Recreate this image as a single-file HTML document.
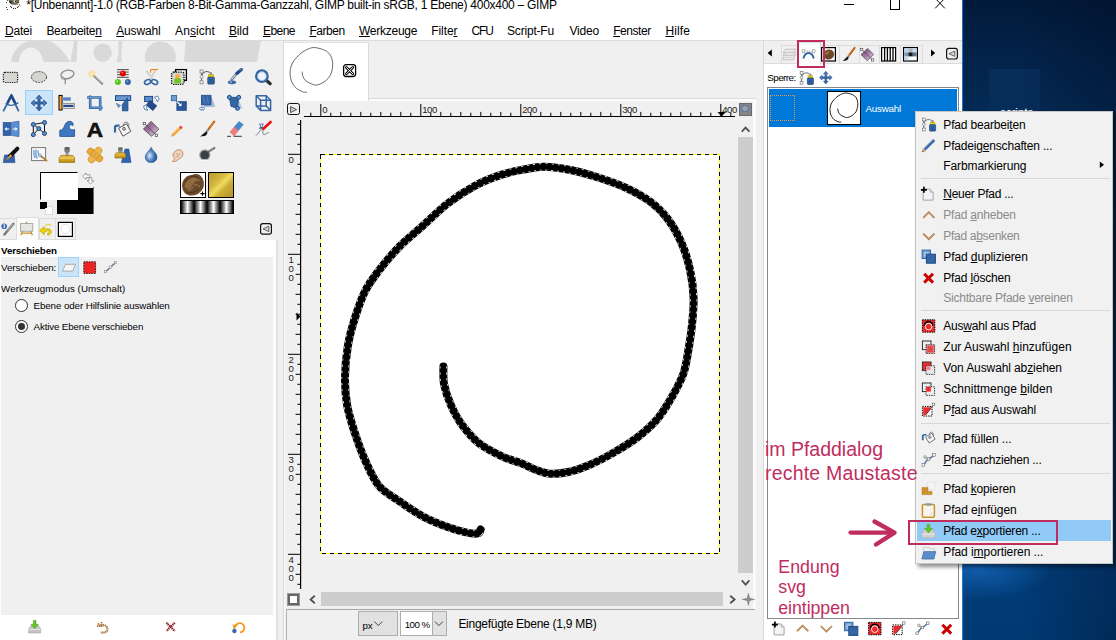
<!DOCTYPE html>
<html lang="de"><head><meta charset="utf-8"><title>GIMP Pfad exportieren</title>
<style>
html,body{margin:0;padding:0}
body{width:1116px;height:640px;overflow:hidden;position:relative;background:#f0f0f0;font-family:"Liberation Sans",sans-serif}
#root{position:absolute;left:0;top:0;width:1116px;height:640px;overflow:hidden}
#root div,#root svg,#root span.t{position:absolute}
span.t{white-space:nowrap;line-height:1;display:block}
span.t u{text-decoration:underline;text-underline-offset:0.9px;text-decoration-thickness:1px}
</style></head><body><div id="root">
<div style="left:963px;top:0;width:153px;height:640px;background:linear-gradient(180deg,#021a3a 0px,#03234a 60px,#042a54 112px,#06386c 400px,#023d79 566px,#003a74 640px)"></div>
<div style="left:963px;top:0;width:153px;height:640px;background:linear-gradient(90deg,rgba(0,10,30,0) 35%,rgba(0,10,30,.32) 100%)"></div>
<div style="left:963px;top:500px;width:153px;height:140px;background:radial-gradient(ellipse 75px 32px at 14px 68px,rgba(30,120,215,.55),rgba(30,120,215,0))"></div>
<div style="left:989px;top:68.7px;width:51.2px;height:43.3px;background:linear-gradient(180deg,rgba(30,100,170,.13),rgba(30,100,170,.06));"></div>
<span class="t d" id="t48" style="left:1000.0px;top:107.01px;font-size:12px;color:#fff;letter-spacing:-0.210px;">scripts</span>
<div style="left:962.2px;top:0px;width:1px;height:640px;background:#1a7ad0;"></div>
<div style="left:0px;top:0px;width:962px;height:40px;background:#fff;"></div>
<div style="left:0px;top:40px;width:962px;height:1px;background:#dcdcdc;"></div>
<div style="left:844px;top:4px;width:10px;height:1px;background:#000;"></div>
<div style="left:889.5px;top:-2px;width:8.5px;height:9.5px;border:1px solid #000;box-sizing:content-box"></div>
<svg style="left:934px;top:-2px" width="12" height="12" viewBox="0 0 12 12"><path d="M1.2 0.3L10.8 10.3M10.8 0.3L1.2 10.3" stroke="#000" stroke-width="1" fill="none"/></svg>
<svg style="left:0;top:0" width="24" height="12" viewBox="0 0 24 12"><path d="M8.6 0L9.2 2.2L10.6 3.8L12.2 4.7L17.6 4.7L18.8 2.6L19.4 0Z" fill="#6f6a5c"/><path d="M8.8 0.6L10.2 3L11.8 3.6L11.4 1.2L10 1.6Z" fill="#111"/><path d="M13.6 0L14 2.6L15.6 3L15.2 0Z" fill="#cfcabc"/><path d="M15.8 3.4L17.8 4.4L17.9 3Z" fill="#c07a22"/><circle cx="15.6" cy="1.5" r=".6" fill="#111"/><circle cx="18.3" cy="2.3" r=".5" fill="#111"/><circle cx="6.5" cy="2.5" r=".55" fill="#111"/><circle cx="6.5" cy="7.5" r=".55" fill="#111"/><circle cx="7.5" cy="9.5" r=".55" fill="#111"/><circle cx="10.4" cy="6.5" r=".55" fill="#111"/><circle cx="11.4" cy="7.4" r=".55" fill="#111"/><circle cx="13.4" cy="8.4" r=".55" fill="#111"/><circle cx="15.4" cy="8.4" r=".55" fill="#111"/><circle cx="17.5" cy="7.4" r=".55" fill="#111"/><circle cx="18.6" cy="6.5" r=".55" fill="#111"/><circle cx="19.4" cy="4.9" r=".55" fill="#111"/><circle cx="7.4" cy="0.3" r=".55" fill="#111"/><path d="M19.4 4.9L20.6 6.6" stroke="#999" stroke-width=".5"/></svg>
<svg style="left:0;top:41px" width="278" height="21" viewBox="0 41 278 21"><g fill="#d9d9d9"><path d="M11.3 62C12 52 19 43 30 41L50 41C59 46 66 54 70.3 62L43.3 62C42 53 37 47.6 31 47.6C25 47.6 20 53 18.8 62Z"/><path d="M70.5 62L74 41L77.5 41L76.5 62Z"/><circle cx="102.6" cy="52.8" r="9.2"/><path d="M116.5 62C119 55 119 47 118 41L122.5 41C121.5 48 121 56 122 62Z"/><circle cx="160.3" cy="57" r="15.6"/><path d="M184 62L185.5 41L261 41L257 62Z"/></g></svg>
<div style="left:25.2px;top:90px;width:26px;height:23px;background:#cce4f7;border:1px solid #99d1ff;box-sizing:content-box"></div>
<div style="left:57px;top:187.5px;width:37px;height:26.5px;background:#000;"></div>
<div style="left:92.5px;top:186.5px;width:1.5px;height:27.5px;background:#666;"></div>
<div style="left:40px;top:172.3px;width:36px;height:25.5px;background:#fff;border:1px solid #000;border-right-color:#fff;border-bottom-color:#fff;box-sizing:content-box"></div>
<div style="left:40px;top:201.5px;width:7px;height:7px;background:#000;"></div>
<div style="left:44.5px;top:206px;width:6px;height:6.5px;background:#fff;border:1px solid #ddd;box-sizing:content-box"></div>
<div style="left:40px;top:201.5px;width:6.5px;height:6.5px;background:#000;"></div>
<div style="left:180px;top:172.3px;width:23.8px;height:24px;background:#fff;border:1px solid #000;box-sizing:content-box"></div>
<div style="left:207.7px;top:172.3px;width:24.5px;height:24px;background:linear-gradient(135deg,#b89a2c 0%,#d4b840 35%,#efdc60 50%,#cdae38 65%,#b39426 100%);border:1px solid #000;box-sizing:content-box"></div>
<div style="left:180px;top:200px;width:52.3px;height:12.3px;background:repeating-linear-gradient(90deg,#000 0px,#fff 6.5px,#000 13px);border:1px solid #000;box-sizing:content-box"></div>
<div style="left:16.4px;top:216.5px;width:22.3px;height:23.7px;background:#fbfbfb;border:1px solid #dcdcdc;border-bottom:none;box-sizing:border-box"></div>
<div style="left:0px;top:218.4px;width:16.4px;height:21.2px;background:#f0f0f0;border:1px solid #dcdcdc;border-left:none;border-right:none;box-sizing:border-box"></div>
<div style="left:38.6px;top:218.4px;width:37.9px;height:21.2px;background:#f0f0f0;border:1px solid #dcdcdc;box-sizing:border-box"></div>
<div style="left:55.3px;top:218.4px;width:1px;height:21.2px;background:#dcdcdc;"></div>
<div style="left:0px;top:239.8px;width:276.4px;height:400.2px;background:#fff;"></div>
<div style="left:276.4px;top:239.8px;width:1.2px;height:400.2px;background:#e2e2e2;"></div>
<div style="left:0.9px;top:257px;width:271.7px;height:357.5px;background:#f0f0f0;"></div>
<div style="left:58.1px;top:257.2px;width:18.9px;height:17.6px;background:#cce4f7;border:1px solid #99d1ff;box-sizing:content-box"></div>
<div style="left:15px;top:299.2px;width:10.7px;height:10.7px;border-radius:50%;background:#fff;border:1px solid #333;box-sizing:content-box"></div>
<div style="left:15px;top:319.9px;width:10.7px;height:10.7px;border-radius:50%;background:#fff;border:1px solid #333;box-sizing:content-box"></div>
<div style="left:17.9px;top:322.8px;width:6.9px;height:6.9px;border-radius:50%;background:#333"></div>
<div style="left:283.3px;top:41px;width:0.9px;height:599px;background:#dadada;"></div>
<div style="left:284.2px;top:41px;width:472.1px;height:57.5px;background:#f0f0f0;"></div>
<div style="left:284.2px;top:98px;width:472.1px;height:0.8px;background:#dadada;"></div>
<div style="left:284.2px;top:98.8px;width:472.1px;height:2.4px;background:#fcfcfc;"></div>
<div style="left:284.2px;top:41.8px;width:85px;height:59.4px;background:#fff;border-right:1px solid #dadada;border-top:1px solid #e4e4e4;box-sizing:border-box"></div>
<div style="left:753.2px;top:101px;width:3.1px;height:508px;background:#fafafa;"></div>
<div style="left:284.2px;top:101px;width:1.3px;height:539px;background:#fafafa;"></div>
<div style="left:287.2px;top:103.2px;width:10.4px;height:10.2px;border:1.2px solid #111;border-radius:2.5px;box-sizing:content-box"></div>
<svg style="left:287px;top:103px" width="13" height="13" viewBox="0 0 13 13"><path d="M3.6 3.6L9.6 6.5L3.6 9.6Z" fill="#ccc" stroke="#444" stroke-width=".9"/></svg>
<svg style="left:0;top:0" width="760" height="640" viewBox="0 0 760 640" shape-rendering="auto"><path d="M304 116.5H735" stroke="#000" stroke-width="1.2"/><path d="M300.6 120V589" stroke="#000" stroke-width="1.2"/><path d="M310.8 112.7V116.5M320.8 104V116.5M330.8 112.7V116.5M340.8 111.9V116.5M350.8 112.7V116.5M360.8 111.9V116.5M370.8 112.7V116.5M380.8 111.9V116.5M390.8 112.7V116.5M400.8 111.9V116.5M410.8 112.7V116.5M420.8 104V116.5M430.8 112.7V116.5M440.8 111.9V116.5M450.8 112.7V116.5M460.8 111.9V116.5M470.8 112.7V116.5M480.8 111.9V116.5M490.8 112.7V116.5M500.8 111.9V116.5M510.8 112.7V116.5M520.8 104V116.5M530.8 112.7V116.5M540.8 111.9V116.5M550.8 112.7V116.5M560.8 111.9V116.5M570.8 112.7V116.5M580.8 111.9V116.5M590.8 112.7V116.5M600.8 111.9V116.5M610.8 112.7V116.5M620.8 104V116.5M630.8 112.7V116.5M640.8 111.9V116.5M650.8 112.7V116.5M660.8 111.9V116.5M670.8 112.7V116.5M680.8 111.9V116.5M690.8 112.7V116.5M700.8 111.9V116.5M710.8 112.7V116.5M720.8 104V116.5M730.8 112.7V116.5" stroke="#000" stroke-width="1"/><path d="M297.4 124.3H300.6M295.6 134.3H300.6M297.4 144.3H300.6M288 154.3H300.6M297.4 164.3H300.6M295.6 174.3H300.6M297.4 184.3H300.6M295.6 194.3H300.6M297.4 204.3H300.6M295.6 214.3H300.6M297.4 224.3H300.6M295.6 234.3H300.6M297.4 244.3H300.6M288 254.3H300.6M297.4 264.3H300.6M295.6 274.3H300.6M297.4 284.3H300.6M295.6 294.3H300.6M297.4 304.3H300.6M295.6 314.3H300.6M297.4 324.3H300.6M295.6 334.3H300.6M297.4 344.3H300.6M288 354.3H300.6M297.4 364.3H300.6M295.6 374.3H300.6M297.4 384.3H300.6M295.6 394.3H300.6M297.4 404.3H300.6M295.6 414.3H300.6M297.4 424.3H300.6M295.6 434.3H300.6M297.4 444.3H300.6M288 454.3H300.6M297.4 464.3H300.6M295.6 474.3H300.6M297.4 484.3H300.6M295.6 494.3H300.6M297.4 504.3H300.6M295.6 514.3H300.6M297.4 524.3H300.6M295.6 534.3H300.6M297.4 544.3H300.6M288 554.3H300.6M297.4 564.3H300.6M295.6 574.3H300.6M297.4 584.3H300.6" stroke="#000" stroke-width="1"/><path d="M717.5 112H725.8L721.6 116.4Z" fill="#000"/><path d="M296.5 312.5V320.5L300.4 316.5Z" fill="#000"/></svg>
<div style="left:739px;top:103.1px;width:12.9px;height:12.5px;background:#858585;border:1px solid #6a6a6a;box-sizing:border-box"></div>
<div style="left:741px;top:104.8px;width:5.5px;height:5.5px;border-radius:50%;background:#a0a0a0;border:1.6px solid #3b6fc0;box-sizing:content-box"></div>
<div style="left:321px;top:155px;width:398px;height:398px;background:#fff;"></div>
<svg style="left:0;top:0" width="760" height="640" viewBox="0 0 760 640"><rect x="320.5" y="154.5" width="399" height="399" fill="none" stroke="#ffff00" stroke-width="1" shape-rendering="crispEdges"/><rect x="320.5" y="154.5" width="399" height="399" fill="none" stroke="#000" stroke-width="1" stroke-dasharray="4 4" shape-rendering="crispEdges"/><path d="M443.4 366.5C443.5 369.5 442.9 378.0 444.1 384.4C445.4 390.8 448.0 398.4 450.9 405.0C453.8 411.6 456.7 417.6 461.3 423.9C465.9 430.2 471.5 437.4 478.4 442.8C485.3 448.2 495.6 453.3 502.5 456.6C509.4 459.9 514.2 460.5 520.0 462.8C525.8 465.1 532.1 468.5 537.2 470.3C542.4 472.1 545.8 473.5 550.9 473.8C556.0 474.1 561.8 473.4 568.1 472.0C574.4 470.6 581.3 468.3 588.8 465.2C596.2 462.1 604.8 457.7 612.8 453.1C620.8 448.5 629.4 443.4 636.9 437.7C644.4 432.0 651.8 425.4 657.5 418.8C663.2 412.2 667.0 405.6 671.3 398.1C675.6 390.6 680.4 382.0 683.3 374.0C686.1 366.0 687.0 358.1 688.4 350.0C689.8 341.9 691.0 334.2 691.9 325.6C692.8 317.0 693.9 307.3 693.6 298.1C693.3 288.9 692.2 279.8 690.2 270.6C688.2 261.4 685.3 251.7 681.6 243.1C677.9 234.5 673.0 225.9 667.8 219.0C662.6 212.1 657.5 207.1 650.6 201.9C643.7 196.8 635.2 192.1 626.6 188.1C618.0 184.1 608.2 180.8 599.0 177.8C589.8 174.8 580.8 172.1 571.6 170.3C562.4 168.5 551.8 167.0 544.0 166.8C536.2 166.6 531.9 168.0 525.0 169.3C518.1 170.6 510.8 171.7 502.5 174.4C494.2 177.1 484.2 180.8 475.0 185.7C465.8 190.6 456.1 197.0 447.5 203.6C438.9 210.2 431.4 218.1 423.4 225.3C415.4 232.5 406.8 239.0 399.4 246.6C392.0 254.2 384.5 263.2 378.8 270.6C373.1 278.1 369.0 283.3 365.0 291.3C361.0 299.3 357.6 309.6 354.7 318.8C351.8 328.0 349.4 336.5 347.8 346.3C346.2 356.1 345.1 367.7 345.0 377.5C344.9 387.3 345.5 395.8 347.1 405.0C348.7 414.2 351.7 423.3 354.7 432.5C357.7 441.7 361.0 451.1 365.0 460.0C369.0 468.9 373.1 478.9 378.8 485.8C384.5 492.7 392.0 496.1 399.4 501.3C406.8 506.5 415.4 512.4 423.4 516.7C431.4 521.0 440.1 524.3 447.5 527.0C454.9 529.7 463.0 531.9 468.1 532.9C473.2 533.9 476.3 533.8 478.4 533.2C480.5 532.6 480.2 530.1 480.6 529.5" fill="none" stroke="#000" stroke-width="8" stroke-linecap="round" stroke-linejoin="round"/><path d="M443.4 366.5C443.5 369.5 442.9 378.0 444.1 384.4C445.4 390.8 448.0 398.4 450.9 405.0C453.8 411.6 456.7 417.6 461.3 423.9C465.9 430.2 471.5 437.4 478.4 442.8C485.3 448.2 495.6 453.3 502.5 456.6C509.4 459.9 514.2 460.5 520.0 462.8C525.8 465.1 532.1 468.5 537.2 470.3C542.4 472.1 545.8 473.5 550.9 473.8C556.0 474.1 561.8 473.4 568.1 472.0C574.4 470.6 581.3 468.3 588.8 465.2C596.2 462.1 604.8 457.7 612.8 453.1C620.8 448.5 629.4 443.4 636.9 437.7C644.4 432.0 651.8 425.4 657.5 418.8C663.2 412.2 667.0 405.6 671.3 398.1C675.6 390.6 680.4 382.0 683.3 374.0C686.1 366.0 687.0 358.1 688.4 350.0C689.8 341.9 691.0 334.2 691.9 325.6C692.8 317.0 693.9 307.3 693.6 298.1C693.3 288.9 692.2 279.8 690.2 270.6C688.2 261.4 685.3 251.7 681.6 243.1C677.9 234.5 673.0 225.9 667.8 219.0C662.6 212.1 657.5 207.1 650.6 201.9C643.7 196.8 635.2 192.1 626.6 188.1C618.0 184.1 608.2 180.8 599.0 177.8C589.8 174.8 580.8 172.1 571.6 170.3C562.4 168.5 551.8 167.0 544.0 166.8C536.2 166.6 531.9 168.0 525.0 169.3C518.1 170.6 510.8 171.7 502.5 174.4C494.2 177.1 484.2 180.8 475.0 185.7C465.8 190.6 456.1 197.0 447.5 203.6C438.9 210.2 431.4 218.1 423.4 225.3C415.4 232.5 406.8 239.0 399.4 246.6C392.0 254.2 384.5 263.2 378.8 270.6C373.1 278.1 369.0 283.3 365.0 291.3C361.0 299.3 357.6 309.6 354.7 318.8C351.8 328.0 349.4 336.5 347.8 346.3C346.2 356.1 345.1 367.7 345.0 377.5C344.9 387.3 345.5 395.8 347.1 405.0C348.7 414.2 351.7 423.3 354.7 432.5C357.7 441.7 361.0 451.1 365.0 460.0C369.0 468.9 373.1 478.9 378.8 485.8C384.5 492.7 392.0 496.1 399.4 501.3C406.8 506.5 415.4 512.4 423.4 516.7C431.4 521.0 440.1 524.3 447.5 527.0C454.9 529.7 463.0 531.9 468.1 532.9C473.2 533.9 476.3 533.8 478.4 533.2C480.5 532.6 480.2 530.1 480.6 529.5" fill="none" stroke="#fff" stroke-width="7.3" stroke-linejoin="round" stroke-dasharray="2.2 3.8" opacity=".9"/><path d="M443.4 366.5C443.5 369.5 442.9 378.0 444.1 384.4C445.4 390.8 448.0 398.4 450.9 405.0C453.8 411.6 456.7 417.6 461.3 423.9C465.9 430.2 471.5 437.4 478.4 442.8C485.3 448.2 495.6 453.3 502.5 456.6C509.4 459.9 514.2 460.5 520.0 462.8C525.8 465.1 532.1 468.5 537.2 470.3C542.4 472.1 545.8 473.5 550.9 473.8C556.0 474.1 561.8 473.4 568.1 472.0C574.4 470.6 581.3 468.3 588.8 465.2C596.2 462.1 604.8 457.7 612.8 453.1C620.8 448.5 629.4 443.4 636.9 437.7C644.4 432.0 651.8 425.4 657.5 418.8C663.2 412.2 667.0 405.6 671.3 398.1C675.6 390.6 680.4 382.0 683.3 374.0C686.1 366.0 687.0 358.1 688.4 350.0C689.8 341.9 691.0 334.2 691.9 325.6C692.8 317.0 693.9 307.3 693.6 298.1C693.3 288.9 692.2 279.8 690.2 270.6C688.2 261.4 685.3 251.7 681.6 243.1C677.9 234.5 673.0 225.9 667.8 219.0C662.6 212.1 657.5 207.1 650.6 201.9C643.7 196.8 635.2 192.1 626.6 188.1C618.0 184.1 608.2 180.8 599.0 177.8C589.8 174.8 580.8 172.1 571.6 170.3C562.4 168.5 551.8 167.0 544.0 166.8C536.2 166.6 531.9 168.0 525.0 169.3C518.1 170.6 510.8 171.7 502.5 174.4C494.2 177.1 484.2 180.8 475.0 185.7C465.8 190.6 456.1 197.0 447.5 203.6C438.9 210.2 431.4 218.1 423.4 225.3C415.4 232.5 406.8 239.0 399.4 246.6C392.0 254.2 384.5 263.2 378.8 270.6C373.1 278.1 369.0 283.3 365.0 291.3C361.0 299.3 357.6 309.6 354.7 318.8C351.8 328.0 349.4 336.5 347.8 346.3C346.2 356.1 345.1 367.7 345.0 377.5C344.9 387.3 345.5 395.8 347.1 405.0C348.7 414.2 351.7 423.3 354.7 432.5C357.7 441.7 361.0 451.1 365.0 460.0C369.0 468.9 373.1 478.9 378.8 485.8C384.5 492.7 392.0 496.1 399.4 501.3C406.8 506.5 415.4 512.4 423.4 516.7C431.4 521.0 440.1 524.3 447.5 527.0C454.9 529.7 463.0 531.9 468.1 532.9C473.2 533.9 476.3 533.8 478.4 533.2C480.5 532.6 480.2 530.1 480.6 529.5" fill="none" stroke="#000" stroke-width="5.6" stroke-linecap="round" stroke-linejoin="round"/></svg>
<svg style="left:287.4px;top:46.4px" width="50" height="50" viewBox="0 0 50 50"><path d="M15.1 26.0C15.2 26.8 15.3 29.2 16.0 30.7C16.7 32.3 17.9 34.2 19.3 35.3C20.8 36.5 23.0 37.2 24.4 37.8C25.9 38.4 26.8 39.1 28.2 39.1C29.6 39.2 31.1 38.8 32.9 38.1C34.6 37.3 37.1 36.1 38.8 34.7C40.4 33.3 41.9 31.7 43.0 29.9C44.0 28.1 44.6 26.0 45.1 24.0C45.5 21.9 45.8 19.8 45.7 17.6C45.6 15.4 45.1 12.8 44.2 10.9C43.4 8.9 42.1 7.2 40.4 5.8C38.8 4.5 36.3 3.6 34.1 2.9C31.9 2.2 29.3 1.6 27.4 1.5C25.4 1.5 24.3 1.7 22.3 2.5C20.3 3.2 17.7 4.6 15.6 6.0C13.5 7.5 11.3 9.5 9.7 11.3C8.0 13.1 6.5 14.7 5.5 16.8C4.4 18.8 3.7 21.2 3.3 23.5C3.0 25.8 2.9 28.4 3.3 30.7C3.6 33.0 4.4 35.5 5.5 37.4C6.5 39.4 8.0 41.1 9.7 42.5C11.3 43.9 13.9 45.0 15.6 45.7C17.2 46.3 18.7 46.4 19.3 46.4C20.0 46.5 19.6 46.0 19.6 46.0" fill="none" stroke="#6a6a6a" stroke-width="1" stroke-linecap="round"/></svg>
<svg style="left:342px;top:63px" width="16" height="16" viewBox="0 0 16 16"><rect x="1.6" y="1.7" width="12" height="11.8" rx="2.4" fill="#fff" stroke="#000" stroke-width="1.3"/><path d="M4.4 4.5L10.8 10.8M10.8 4.5L4.4 10.8" stroke="#000" stroke-width="2.6" stroke-linecap="round"/><path d="M4.4 4.5L10.8 10.8M10.8 4.5L4.4 10.8" stroke="#fff" stroke-width="1" stroke-linecap="round"/></svg>
<div style="left:738.3px;top:137.3px;width:14.5px;height:436.2px;background:#cdcdcd;"></div>
<div style="left:321px;top:592.3px;width:401.7px;height:14.2px;background:#cdcdcd;"></div>
<svg style="left:300px;top:120px" width="460" height="490" viewBox="300 120 460 490"><g fill="none" stroke="#505050" stroke-width="1.8"><path d="M741.8 131.6L745.6 127.6L749.4 131.6"/><path d="M741.8 580.4L745.6 584.6L749.4 580.4"/><path d="M314.8 595.8L310.6 599.5L314.8 603.2"/><path d="M730.2 595.8L734.6 599.5L730.2 603.2"/></g></svg>
<div style="left:287.6px;top:593.6px;width:7.4px;height:7.4px;background:#fff;border:2.4px dashed #666;outline:0.6px solid #999;box-sizing:content-box"></div>
<svg style="left:742px;top:593px" width="13" height="13" viewBox="0 0 13 13"><path d="M6.4 0.3L7.6 5.2L12.6 6.4L7.6 7.6L6.4 12.6L5.2 7.6L0.2 6.4L5.2 5.2Z" fill="#8c8c8c" stroke="#666" stroke-width=".4"/></svg>
<div style="left:285.5px;top:609px;width:469px;height:1.1px;background:#a6a6a6;"></div>
<div style="left:285.5px;top:609px;width:1px;height:31px;background:#b4b4b4;"></div>
<div style="left:358.2px;top:611.4px;width:40px;height:25px;background:#e1e1e1;border:1.5px solid #adadad;box-sizing:border-box"></div>
<div style="left:400.2px;top:611.4px;width:46.4px;height:25px;background:#fff;border:1.5px solid #adadad;box-sizing:border-box"></div>
<div style="left:432.3px;top:612.4px;width:13.3px;height:23px;background:#e1e1e1;border-left:1px solid #adadad;box-sizing:border-box"></div>
<svg style="left:370px;top:615px" width="80" height="16" viewBox="370 615 80 16"><g fill="none" stroke="#444" stroke-width="1"><path d="M374.4 621.6L378.3 625.6L382.2 621.6"/><path d="M435 621.6L438.9 625.6L442.8 621.6"/></g></svg>
<div style="left:763.4px;top:64px;width:198.6px;height:576px;background:#fff;"></div>
<div style="left:762.6px;top:41px;width:0.9px;height:599px;background:#dadada;"></div>
<div style="left:763.4px;top:63.3px;width:198.6px;height:0.8px;background:#dcdcdc;"></div>
<div style="left:780.8px;top:45px;width:0.9px;height:18.5px;background:#dcdcdc;"></div>
<div style="left:820.2px;top:45px;width:0.9px;height:18.5px;background:#dcdcdc;"></div>
<div style="left:839.4px;top:45px;width:0.9px;height:18.5px;background:#dcdcdc;"></div>
<div style="left:858.8px;top:45px;width:0.9px;height:18.5px;background:#dcdcdc;"></div>
<div style="left:878.5px;top:45px;width:0.9px;height:18.5px;background:#dcdcdc;"></div>
<div style="left:900px;top:45px;width:0.9px;height:18.5px;background:#dcdcdc;"></div>
<div style="left:922.4px;top:45px;width:0.9px;height:18.5px;background:#dcdcdc;"></div>
<div style="left:780.8px;top:44.5px;width:142.5px;height:0.9px;background:#dcdcdc;"></div>
<div style="left:797.5px;top:41.5px;width:23px;height:23.5px;background:#fbfbfb;border:1px solid #dcdcdc;border-bottom:none;box-sizing:border-box"></div>
<div style="left:767.2px;top:87.4px;width:191.8px;height:531.2px;background:#fff;border:1px solid #828790;box-sizing:border-box"></div>
<div style="left:769px;top:89px;width:188.3px;height:37.7px;background:#0078d7;"></div>
<div style="left:769.8px;top:95.2px;width:23.6px;height:23.6px;border:1.2px dotted #e8963c;box-sizing:content-box"></div>
<div style="left:827.2px;top:91px;width:33.6px;height:34px;background:#fff;border:1px solid #000;box-sizing:border-box"></div>
<svg style="left:828.2px;top:92px" width="32" height="32" viewBox="0 0 32 32"><path d="M9.8 17.0C9.9 17.5 10.0 19.0 10.4 20.1C10.9 21.1 11.7 22.3 12.6 23.1C13.6 23.9 15.0 24.3 16.0 24.7C16.9 25.1 17.5 25.5 18.4 25.6C19.3 25.6 20.3 25.4 21.5 24.9C22.6 24.4 24.2 23.6 25.3 22.7C26.4 21.8 27.4 20.7 28.1 19.5C28.8 18.3 29.1 17.0 29.4 15.7C29.7 14.3 29.9 12.9 29.8 11.5C29.8 10.1 29.5 8.4 28.9 7.1C28.3 5.8 27.5 4.7 26.4 3.8C25.3 2.9 23.7 2.3 22.3 1.9C20.9 1.4 19.2 1.0 17.9 1.0C16.6 1.0 15.8 1.1 14.6 1.6C13.3 2.1 11.5 3.0 10.2 3.9C8.8 4.9 7.4 6.2 6.3 7.4C5.2 8.6 4.2 9.6 3.6 11.0C2.9 12.3 2.4 13.8 2.2 15.4C1.9 16.9 1.9 18.5 2.1 20.1C2.4 21.6 2.9 23.2 3.6 24.5C4.3 25.7 5.2 26.9 6.3 27.8C7.4 28.7 9.1 29.4 10.2 29.8C11.2 30.2 12.2 30.3 12.6 30.3C13.1 30.3 12.8 30.1 12.8 30.0" fill="none" stroke="#222" stroke-width="1" stroke-linecap="round"/></svg>
<svg style="left:0;top:0" width="280" height="640" viewBox="0 0 280 640">
<defs><radialGradient id="gw"><stop offset="0" stop-color="#fffbe0"/><stop offset=".45" stop-color="#fbd98a"/><stop offset="1" stop-color="#fbd98a" stop-opacity="0"/></radialGradient><radialGradient id="gd" cx=".38" cy=".55" r=".6"><stop offset="0" stop-color="#dfeaf8"/><stop offset=".5" stop-color="#5b8ccb"/><stop offset="1" stop-color="#204a87"/></radialGradient><linearGradient id="gp" x1="0" y1="0" x2="1" y2="1"><stop offset="0" stop-color="#6a3f72"/><stop offset=".5" stop-color="#a57aa6"/><stop offset="1" stop-color="#eee4ee"/></linearGradient><linearGradient id="gs" x1="0" y1="0" x2="0" y2="1"><stop offset="0" stop-color="#f0c545"/><stop offset="1" stop-color="#c18a17"/></linearGradient><radialGradient id="gk"><stop offset="0" stop-color="#2e3436"/><stop offset=".6" stop-color="#4a5054"/><stop offset="1" stop-color="#4a5054" stop-opacity="0"/></radialGradient><linearGradient id="gh" x1="0" y1="0" x2="0" y2="1"><stop offset="0" stop-color="#555"/><stop offset="1" stop-color="#aaa"/></linearGradient></defs>
<rect x="3.4" y="72.3" width="14.2" height="10.2" rx="1.6" fill="#d3d7cf" stroke="#111" stroke-width="1.2" stroke-dasharray="1.2 1.1"/>
<ellipse cx="39" cy="77" rx="7.6" ry="5.4" fill="#d3d7cf" stroke="#444" stroke-width="1" stroke-dasharray="2 1"/>
<ellipse cx="67.4" cy="74.4" rx="6.6" ry="4.2" transform="rotate(-12 67.4 74.4)" fill="none" stroke="#8a8a8a" stroke-width="1.3"/><path d="M62.8 77.8C65 79 66.4 81 64.8 84.2" fill="none" stroke="#8a8a8a" stroke-width="1.2"/><circle cx="62.7" cy="78" r="1.3" fill="#bbb" stroke="#888" stroke-width=".6"/>
<path d="M92.6 74.6L102.2 83.8" stroke="#8c8c84" stroke-width="2.2" stroke-linecap="round"/><path d="M93 74.4L101.8 82.8" stroke="#c8c8c0" stroke-width=".8"/><circle cx="91.8" cy="73.7" r="4.2" fill="url(#gw)"/>
<path d="M117 69.6H128.8M117 72.1H128.8M117 74.7H128.8M117 77.3H128.8" stroke="#222" stroke-width=".8"/><circle cx="122.9" cy="73.4" r="3" fill="#e40000"/><circle cx="122.2" cy="72.6" r="1" fill="#ff6a5a"/><circle cx="117.9" cy="82" r="3" fill="#59c41c"/><circle cx="117.2" cy="81.2" r="1" fill="#a8ee70"/><circle cx="127.9" cy="82" r="3" fill="#3465a4"/><circle cx="127.2" cy="81.2" r="1" fill="#729fcf"/>
<path d="M146.4 70.8L152.6 79.4M155.4 70.8L149.6 79.4" stroke="#b8b8b8" stroke-width="1.6"/><path d="M146.4 70.8L152.6 79.4M155.4 70.8L149.6 79.4" stroke="#fff" stroke-width=".5"/><ellipse cx="147.6" cy="82" rx="3.2" ry="2.2" transform="rotate(-25 147.6 82)" fill="none" stroke="#3465a4" stroke-width="1.6"/><ellipse cx="154.6" cy="82" rx="3.2" ry="2.2" transform="rotate(25 154.6 82)" fill="none" stroke="#3465a4" stroke-width="1.6"/><path d="M150.6 72.8V69.6H158" fill="none" stroke="#f57900" stroke-width="1"/>
<rect x="175.6" y="69.6" width="10.8" height="10.8" fill="#f4f4f4" stroke="#000" stroke-width="1.3"/><rect x="171.6" y="72.2" width="12.4" height="12.2" rx="2" fill="#d3d7cf" stroke="#000" stroke-width="1.3" stroke-dasharray="1.2 1.1"/><path d="M174.2 83.2V80.4C174.2 78.6 175.4 77.8 177.6 77.8C179.8 77.8 181 78.6 181 80.4V83.2Z" fill="#6cc81e"/><circle cx="177.6" cy="76.2" r="2.3" fill="#fcaf3e"/>
<g transform="translate(199.4 69.8) scale(1.08)"><path d="M2 1.5V11.5M2 5C4 1.5 7 0.8 9.6 2.6" fill="none" stroke="#666" stroke-width="1"/><rect x="0.6" y="0.2" width="2.8" height="2.8" fill="#fff" stroke="#777" stroke-width=".7"/><circle cx="2" cy="6.4" r="1.4" fill="#fff" stroke="#777" stroke-width=".7"/><rect x="0.6" y="10.2" width="2.8" height="2.8" fill="#fff" stroke="#777" stroke-width=".7"/><path d="M9.8 2.2L11.6 2.2L11.9 5H9.5Z" fill="#8a8a8a"/><rect x="8.4" y="4.6" width="4.8" height="2.2" fill="#edd400" stroke="#b39a00" stroke-width=".4"/><rect x="7.8" y="6.8" width="6" height="6.4" rx=".6" fill="#3465a4" stroke="#204a87" stroke-width=".8"/><rect x="9.6" y="8.4" width="2.4" height="4.4" fill="#204a87" opacity=".5"/></g>
<ellipse cx="232" cy="82.3" rx="4" ry="1.6" fill="#3465a4" stroke="#204a87" stroke-width=".5"/><ellipse cx="231" cy="82.1" rx="1.2" ry=".5" fill="#dde8f6"/><path d="M231.6 79.6L237 73" stroke="#5f6f88" stroke-width="2.6" stroke-linecap="round"/><path d="M231.8 79.2L236.8 73.2" stroke="#c6d2e6" stroke-width="1.2" stroke-linecap="round"/><path d="M236.8 73.4L241.4 69.6" stroke="#204a87" stroke-width="3.2" stroke-linecap="round"/><path d="M239.6 70.2L241.2 69" stroke="#5c85bd" stroke-width="1.2" stroke-linecap="round"/>
<path d="M266.8 80.8L270.2 83.8" stroke="#2e2e2e" stroke-width="3.2" stroke-linecap="round"/><circle cx="261.9" cy="76.2" r="5.8" fill="#eef2fa" stroke="#3465a4" stroke-width="2.2"/><circle cx="261.9" cy="76.2" r="4.4" fill="none" stroke="#729fcf" stroke-width=".6"/>
<path d="M11.4 96L3.6 110.6M11.4 96L18.4 110.6" stroke="#3465a4" stroke-width="1.8" stroke-linecap="round"/><path d="M11.4 95.4L7.8 102.4M11.4 95.4L14.8 102.4" stroke="#204a87" stroke-width="2.6" stroke-linecap="round"/><path d="M5.6 103.4C9 106 14 106 18.2 102.6" fill="none" stroke="#3465a4" stroke-width="1.7"/><circle cx="11.4" cy="96" r="1.3" fill="#204a87"/>
<g transform="translate(31 95)"><path d="M8 0L11 3.4H9.1V6.9H12.6V5L16 8L12.6 11V9.1H9.1V12.6H11L8 16L5 12.6H6.9V9.1H3.4V11L0 8L3.4 5V6.9H6.9V3.4H5Z" fill="#3465a4" stroke="#204a87" stroke-width=".6" stroke-linejoin="round"/><path d="M8 1.4L9.8 3.4H6.2ZM1.4 8L3.4 6.2V9.8ZM14.6 8L12.6 6.2V9.8Z" fill="#729fcf" opacity=".7"/></g>
<rect x="59" y="95.4" width="3.1" height="14.6" fill="#fcaf3e" stroke="#000" stroke-width="1"/><rect x="62.8" y="97.3" width="7.9" height="3.4" fill="#5c85bd" stroke="#8ba6cf" stroke-width=".6"/><rect x="62.8" y="103.4" width="11.6" height="5" fill="#e8e8e8" stroke="#888" stroke-width=".9"/><rect x="63.4" y="104.8" width="10" height="2.2" fill="#204a87"/>
<path d="M87 97.5H100.2V110.8M90.2 95.4V107.7H102.6" fill="none" stroke="#3465a4" stroke-width="2.6"/><path d="M87 97.5H100.2V110.8M90.2 95.4V107.7H102.6" fill="none" stroke="#729fcf" stroke-width=".9"/>
<rect x="115.5" y="95.7" width="15.2" height="4.8" fill="#6b96d0" stroke="#204a87" stroke-width="1"/><path d="M127.4 98L122.4 104.4V110.8H127.9V100.4Z" fill="#3465a4" stroke="#204a87" stroke-width=".9"/><path d="M116.2 103.2L120.6 105.4L118.4 107.6Z" fill="#729fcf" stroke="#3465a4" stroke-width=".6"/>
<rect x="144.6" y="96.4" width="8" height="5.2" fill="#5b8ccb" stroke="#204a87" stroke-width="1"/><rect x="147.4" y="102.6" width="8.2" height="5.6" transform="rotate(40 151.5 105.4)" fill="#204a87" stroke="#204a87" stroke-width="1"/><path d="M154.4 97.2L157.6 96L159.2 99.2L157.4 101.8L156.6 99.6Z" fill="#fff" stroke="#3465a4" stroke-width=".8"/><path d="M146.8 104.8L143.6 106L144.6 109.4L147.6 110.4L146.6 108.2Z" fill="#fff" stroke="#3465a4" stroke-width=".8"/>
<rect x="171.4" y="95.5" width="5.2" height="5.2" fill="#729fcf" stroke="#3465a4" stroke-width=".9"/><rect x="176.4" y="101.2" width="10.4" height="9.6" fill="#204a87"/><rect x="177.2" y="102" width="8.8" height="8" fill="#2a5599"/><path d="M177.2 101.8L180.4 105" stroke="#fff" stroke-width="1.2"/><path d="M181.6 103L181.4 106.2L178.4 106Z" fill="#fff"/>
<path d="M211 97L214.8 106.6H204Z" fill="#a9c0e0" stroke="#8ba6cf" stroke-width=".6"/><rect x="201.4" y="95.3" width="9.6" height="9.6" fill="#3465a4" stroke="#204a87" stroke-width=".8"/><path d="M203 96.6L205.4 103.6M207 96.6L208.4 103.6" stroke="#5b8ccb" stroke-width=".8"/><path d="M199.2 108.6L201.4 106.8V107.8H203V106.8L205 108.6L203 110.4V109.4H201.4V110.4Z" fill="#fff" stroke="#3465a4" stroke-width=".7"/>
<path d="M238.6 99L242.4 108.8H236Z" fill="#b4c6e2"/><path d="M229.4 97.3H238.7L237.5 108.3L231 106.4Z" fill="#3465a4" stroke="#204a87" stroke-width=".8"/><circle cx="229.4" cy="97.3" r="2" fill="#5b8ccb" stroke="#204a87" stroke-width="1"/><circle cx="238.7" cy="97.3" r="2" fill="#5b8ccb" stroke="#204a87" stroke-width="1"/><circle cx="237.5" cy="108.3" r="2" fill="#5b8ccb" stroke="#204a87" stroke-width="1"/>
<g fill="none" stroke="#3465a4" stroke-width="1.5" stroke-linejoin="round"><rect x="256.2" y="95.8" width="10" height="10.2"/><rect x="260.6" y="100.2" width="10" height="10.2"/><path d="M256.2 95.8L260.6 100.2M266.2 95.8L270.6 100.2M256.2 106L260.6 110.4M266.2 106L270.6 110.4"/></g>
<rect x="3.2" y="122.6" width="7.4" height="12.8" fill="#2f63ae" stroke="#204a87" stroke-width=".7"/><path d="M11.2 122.4L19 121.2V136.6L11.2 135.4Z" fill="#5d90d2" stroke="#3465a4" stroke-width=".7"/><path d="M4.6 129L6.8 127V128.4H9.2V129.6H6.8V131ZM17.6 129L15.4 127V128.4H12.8V129.6H15.4V131Z" fill="#fff"/>
<path d="M33.3 124.5L44.5 122.5V133.5L38.8 128.6L33.3 134.7ZM33.3 124.5L38.8 128.6" fill="none" stroke="#111" stroke-width="1"/><circle cx="33.3" cy="124.5" r="2" fill="#5b8ccb" stroke="#204a87" stroke-width="1"/><circle cx="44.5" cy="122.5" r="2" fill="#5b8ccb" stroke="#204a87" stroke-width="1"/><circle cx="38.8" cy="128.6" r="2" fill="#5b8ccb" stroke="#204a87" stroke-width="1"/><circle cx="33.3" cy="134.7" r="2" fill="#5b8ccb" stroke="#204a87" stroke-width="1"/><circle cx="44.5" cy="133.5" r="2" fill="#5b8ccb" stroke="#204a87" stroke-width="1"/>
<path d="M59.8 136.4V130.2C62.4 130.6 63.6 128.4 64.6 125.6C65.8 122.2 68.6 120.6 71 121.6C73 122.4 73.6 124 73 125.6C71.6 124.2 69.6 124.4 69.2 126.4C68.8 128.6 71.4 130.6 74.6 129.6V136.4Z" fill="#3f78c2" stroke="#204a87" stroke-width=".8"/>
<text x="95" y="136.6" font-family="Liberation Sans, sans-serif" font-weight="bold" font-size="20.4" text-anchor="middle" textLength="16.4" lengthAdjust="spacingAndGlyphs" fill="#111" stroke="#111" stroke-width=".5">A</text>
<g transform="translate(114 122.6)"><path d="M1 10V4.6C1 3.4 2 3 3 3H5.6" fill="none" stroke="#3465a4" stroke-width="2.2"/><path d="M4.6 5.6L12.6 1.2L16.8 8.8L9 13.6Z" fill="#f6f6f6" stroke="#555" stroke-width="1"/><path d="M9.6 2.6C9.4 0.4 11 -1 13 -0.2C14.6 0.6 15 2.6 14.8 5" fill="none" stroke="#777" stroke-width="1"/><circle cx="10" cy="6.2" r="1.5" fill="#bbb" stroke="#555" stroke-width=".8"/></g>
<path d="M151.1 121.4L158.8 129L151.5 136.3L143.4 129Z" fill="url(#gp)" stroke="#555" stroke-width=".9"/><path d="M145 124L156 135" stroke="#444" stroke-width=".8"/><rect x="143.2" y="122.4" width="2.4" height="2.4" fill="#fff" stroke="#444" stroke-width=".7"/><rect x="155.2" y="134" width="2.4" height="2.4" fill="#fff" stroke="#444" stroke-width=".7"/>
<path d="M172.6 135.2L180.6 127.6" stroke="#f5a030" stroke-width="2.8"/><path d="M172.4 134.4L180 127.2" stroke="#fdd080" stroke-width=".7"/><path d="M180 128.2L181.8 126.6" stroke="#ef4040" stroke-width="2.8"/><path d="M171 136.8L171.8 134.2L173.6 136Z" fill="#c9a36a"/>
<path d="M214.2 121.6L208 129.8" stroke="#c3640c" stroke-width="2.2" stroke-linecap="round"/><path d="M213.6 121.8L210 126.4" stroke="#f0a040" stroke-width=".7"/><path d="M208.2 129.6L206 132.4" stroke="#999" stroke-width="2.4"/><path d="M206.8 131.4C208 133 206.6 135.4 204.6 136L200 136.4C202.6 135 204 132.4 206.8 131.4Z" fill="#111"/>
<path d="M229.9 132.1L234.4 126.8L238.7 130.2L234.2 135.9Z" fill="#e98080" stroke="#d46a6a" stroke-width=".5"/><path d="M234.4 126.8L239 121.4L243.3 124.6L238.7 130.2Z" fill="#4b88ca" stroke="#3a74b4" stroke-width=".5"/><path d="M227.2 136.3H231M233.6 136.3H241.8" stroke="#333" stroke-width="1"/>
<path d="M255.8 135.8C258.6 133.6 259.6 130 262 129.6C264 129.4 262 134.6 263.8 134.8C265.4 134.8 266.6 132.4 269.2 132.6" fill="none" stroke="#6f8490" stroke-width=".9"/><path d="M259.4 124H263.4L262 126.2L263.4 128.6H259.4L260.8 126.2Z" fill="#e8f0fa" stroke="#3465a4" stroke-width=".8"/><path d="M260 127.6H262.8" stroke="#3465a4" stroke-width="1.2"/><path d="M270.6 122L263.4 128.8" stroke="#ef1010" stroke-width="2.6" stroke-linecap="round"/>
<path d="M3.2 162.6L4.6 155H14.2L15 162.6Z" fill="#2f63ae" stroke="#204a87" stroke-width=".6"/><path d="M17.4 148.6L10 156" stroke="#111" stroke-width="4" stroke-linecap="round"/><path d="M10.6 154.2L12.2 156.2L5.2 160.8Z" fill="#e8b560" stroke="#8a5a10" stroke-width=".5"/>
<rect x="31.6" y="147.6" width="14" height="13" fill="#fafafa" stroke="#777" stroke-width="1"/><path d="M34 150C33.4 153 34 156 35.2 158M36 149.4C35.6 152 36 156.4 37.4 158.6M37.8 150.4C38 153 38.4 155 39.4 156.2" fill="none" stroke="#7aa7dc" stroke-width="1.5"/><path d="M40.8 156L46.6 160.6" stroke="#b9771e" stroke-width="1.7" stroke-linecap="round"/><circle cx="40" cy="155.4" r="1.4" fill="#dfe8f4" stroke="#4a6a9a" stroke-width=".6"/>
<path d="M64.4 147.8C64.4 146.6 69.8 146.6 69.8 147.8V151C69.8 152 68.6 152.4 68.6 153.4V156H65.6V153.4C65.6 152.4 64.4 152 64.4 151Z" fill="url(#gh)"/><path d="M61 155.4H72.8L74.6 157.8V162.4H59.2V157.8Z" fill="url(#gs)" stroke="#8f6a10" stroke-width=".7"/><path d="M59.6 158.2H74.2" stroke="#f8dc80" stroke-width=".8"/>
<g transform="rotate(38 95 155)"><rect x="86" y="151.6" width="18" height="6.8" rx="3.2" fill="#e9a93a" stroke="#c98518" stroke-width=".6"/></g><g transform="rotate(-52 95 155)"><rect x="86" y="151.6" width="18" height="6.8" rx="3.2" fill="#eeb650" stroke="#c98518" stroke-width=".6"/><rect x="92" y="152.2" width="6" height="5.6" fill="#d99a30"/><path d="M93.4 153.6H93.5M95 153.6H95.1M96.6 153.6H96.7M93.4 156.4H93.5M95 156.4H95.1M96.6 156.4H96.7" stroke="#f8e0b0" stroke-width="1" stroke-linecap="round"/></g>
<path d="M125 149H128.8L131 162.6H121.4Z" fill="#2f63ae" stroke="#204a87" stroke-width=".6"/><rect x="118.2" y="147.4" width="4.4" height="6" fill="url(#gh)"/><path d="M116.2 152.8H124.4L125.6 154.4V158H115V154.4Z" fill="url(#gs)" stroke="#8f6a10" stroke-width=".6"/>
<path d="M151.1 147.2C152.2 150.6 157 153 157 157C157 160.4 154.4 162.6 151.1 162.6C147.8 162.6 145.2 160.4 145.2 157C145.2 153 150 150.6 151.1 147.2Z" fill="url(#gd)" stroke="#204a87" stroke-width=".5"/>
<path d="M176 150.6C178 149 181 149.4 182.4 151.6C183.6 153.6 182.8 156.4 180.8 157.8L178.2 159.6C176.6 161.4 173.8 162 172.4 161.2C173.2 160 174.4 159.6 175 158.4C172.8 157.2 172.4 154.2 174 152.4Z" fill="#efd2bc" stroke="#b87a4e" stroke-width=".8"/><path d="M176.4 153.4C177.4 154.6 178.8 155 180 154.4M175.8 156C176.8 156.8 177.8 156.8 178.6 156.4" fill="none" stroke="#b87a4e" stroke-width=".6"/>
<path d="M208.6 151.6L214.4 148" stroke="#7c8082" stroke-width="2.2" stroke-linecap="round"/><circle cx="204.8" cy="155" r="6.2" fill="url(#gk)"/><circle cx="204.8" cy="155" r="4" fill="#3a4044"/><ellipse cx="204.8" cy="160.2" rx="3.2" ry=".8" fill="#fff"/>
<path d="M82.6 176.2L86 173V174.8H89.8V177.6H86V179.4Z" fill="#fff" stroke="#777" stroke-width=".7"/><path d="M90.6 184L87.2 180.8H89V177.6H91.8V180.8H93.8Z" fill="#fff" stroke="#777" stroke-width=".7"/>
<path d="M182.4 188C181.4 184 183 179.4 186.6 176.6C189 174.8 191.6 175.4 193.6 174.4C196.6 173.4 200 174.6 201.6 177C203.6 179.4 204.4 183 203.6 186.4C203 189.6 200.8 191.4 198.6 193.6C196 195.6 191.4 196 188 195C185 194 183 191.4 182.4 188Z" fill="#6a4a2a"/><path d="M184.6 186C185 182.6 187.4 179.2 191 178.2C194.6 177.2 198.6 178.4 200.4 181.4C198.4 180.4 196 180.8 194.4 182.4C192.6 184.2 192 187.4 189.6 188.8C187.6 189.8 185.2 188.6 184.6 186Z" fill="#8f6b3e"/><path d="M187 192C190 193.4 195 192.6 198.4 189M190 176.6C192.6 175.6 196 176 198.6 178M185 183C186 180 188 178.6 190 178" fill="none" stroke="#4a3018" stroke-width="1"/><path d="M194 185C196 184.4 198.6 185 200 187M188 190.6C190 190 192.4 188.6 193.4 186.6" fill="none" stroke="#a8844e" stroke-width=".9"/><path d="M200.4 193.6H204.6M202.5 191.4V195.8" stroke="#000" stroke-width="1.1"/>
<circle cx="4.2" cy="226.2" r="2.8" fill="#3a6ab8"/><rect x="3.7" y="224" width="1" height="4" fill="#fff"/><path d="M13.4 223.8L4.4 234.6" stroke="#777" stroke-width="2.4" stroke-linecap="round"/><path d="M13 224L7.6 230.4" stroke="#c4c4c4" stroke-width=".9"/>
<path d="M26.6 221.8V223.6M22.6 231L20.8 235.2M30.6 231L32.4 235.2M21.8 233.2H31.4" stroke="#c8902a" stroke-width="1.3" fill="none"/><rect x="20.4" y="223.6" width="12.4" height="7.6" fill="#e6e6e2" stroke="#9a9a92" stroke-width=".8"/>
<path d="M39.6 230.6L44.2 226.4V228.8H48.4C50.2 228.8 51.4 230.4 51.2 232C51 234 49.6 235.2 47.6 235.2V233.2C48.8 233.2 49.2 232.6 49.2 231.8C49.2 231 48.6 230.6 47.8 230.6L44.2 232.4V234.8Z" fill="#edd400" stroke="#b39a00" stroke-width=".6"/><path d="M45.4 225.6C47.4 223.6 50.4 224 51 226" fill="none" stroke="#e8d040" stroke-width="1.2"/>
<rect x="58.4" y="222.4" width="14" height="14" fill="#fff" stroke="#000" stroke-width="1.2"/><circle cx="65.4" cy="229" r="4.6" fill="none" stroke="#ccc" stroke-width=".6"/>
<rect x="260.6" y="223.6" width="10.8" height="10.6" rx="2.2" fill="#f0f0f0" stroke="#111" stroke-width="1.2"/><path d="M268.8 226.2V231.6L263 228.9Z" fill="#d8d8d8" stroke="#444" stroke-width=".8"/>
<path d="M65.6 264.3H75.5L72.8 271.1H62.4Z" fill="#f4f4f4" stroke="#aaa" stroke-width="1"/>
<rect x="83.8" y="261.8" width="11.8" height="11.6" fill="#ee2424" stroke="#222" stroke-width="1" stroke-dasharray="1.6 1"/>
<path d="M105.4 272L115.6 262.6" stroke="#54708f" stroke-width="1.3"/><rect x="109.2" y="266" width="2.6" height="2.6" fill="#fff" stroke="#777" stroke-width=".5"/><rect x="104.4" y="270.6" width="2.2" height="2.2" fill="#fff" stroke="#777" stroke-width=".5"/><rect x="114.4" y="261.6" width="2.2" height="2.2" fill="#fff" stroke="#777" stroke-width=".5"/>
<path d="M28.6 633V629L31 625.4H38.4L40.8 629V633Z" fill="#c4c4c4" stroke="#a8a8a8" stroke-width=".6"/><path d="M28.8 629.4H40.6" stroke="#eee" stroke-width=".8"/><path d="M33.4 620.4H36V624.4H38.4L34.7 628.6L31 624.4H33.4Z" fill="#62c81e" stroke="#3f9a10" stroke-width=".5"/>
<path d="M98 623.4L101 626.4M97 626H101.6V621.6" fill="none" stroke="#b07c48" stroke-width="1.8" stroke-dasharray="1.3 .5"/><path d="M101 625.4C104.8 624.2 107.8 626.6 107.4 629.6C107 632.2 104 633.4 100.6 632.2" fill="none" stroke="#b07c48" stroke-width="2.1" stroke-dasharray="1.4 .5"/>
<path d="M166.4 622.8L174.8 631M174.8 622.8L166.4 631" stroke="#8c1c1c" stroke-width="2.2" stroke-dasharray="1.3 .6"/>
<path d="M234.6 627.4C235.6 623.4 240.6 621.6 243.2 624.6C245.6 627.4 244 632 240 632.4" fill="none" stroke="#f59a1c" stroke-width="1.8"/><path d="M232.4 624.4L237.6 625.2L234 629.4Z" fill="#f59a1c"/><circle cx="234.4" cy="631" r="1.9" fill="#3a6ab8" stroke="#204a87" stroke-width=".5"/>
</svg>
<svg style="left:760px;top:40px" width="203" height="600" viewBox="760 40 203 600">
<defs><linearGradient id="gp2" x1="0" y1="0" x2="1" y2="1"><stop offset="0" stop-color="#6a3f72"/><stop offset=".5" stop-color="#a57aa6"/><stop offset="1" stop-color="#eee4ee"/></linearGradient></defs>
<path d="M771.8 49.4V56.4L767.6 52.9Z" fill="#000"/><path d="M931 49.4V56.4L935.2 52.9Z" fill="#000"/>
<g fill="#e9e9e9" stroke="#bdbdbd" stroke-width=".8"><path d="M783 58L785.4 54.6H796L793.6 58Z"/><path d="M783 55.4L785.4 52H796L793.6 55.4Z"/><path d="M783 52.6L785.4 49.2H796L793.6 52.6Z"/><path d="M783 58V59.8H793.6V58"/></g>
<path d="M803.4 58.6C804.4 54.6 806.4 53 808.6 53C810.8 53 812.8 54.6 813.8 58.6" fill="none" stroke="#3465a4" stroke-width="1.9"/><path d="M804.8 51.2H812.4" stroke="#999" stroke-width=".8" stroke-dasharray="1.2 .8"/><rect x="802.2" y="49.8" width="2.6" height="2.6" fill="#fff" stroke="#888" stroke-width=".6"/><rect x="812.4" y="49.8" width="2.6" height="2.6" fill="#fff" stroke="#888" stroke-width=".6"/>
<rect x="821.6" y="47.6" width="13.8" height="13.4" fill="#fff" stroke="#000" stroke-width="1.2"/><path d="M823.4 55C823 51.6 826 49.2 829.4 49.4C832.4 49.6 834.4 52 834 55C833.6 58 831 59.8 828 59.6C825.6 59.4 823.8 57.6 823.4 55Z" fill="#6b4a28"/><path d="M825 54C825.6 51.8 828 50.6 830.4 51.2C829 52 828.4 53.6 827.4 54.8C826.6 55.4 825.4 55 825 54Z" fill="#94703e"/>
<path d="M854.6 47.8L849.2 55.2" stroke="#c3640c" stroke-width="2" stroke-linecap="round"/><path d="M849.4 55L847.6 57.4" stroke="#999" stroke-width="2.2"/><path d="M848.2 56.6C849.2 58 848 60 846.2 60.6L842.6 61C844.8 59.8 846 57.4 848.2 56.6Z" fill="#111"/>
<path d="M867.6 48.4L873.6 54.4L867.2 60.6L861 54.6Z" fill="url(#gp2)" stroke="#555" stroke-width=".8"/><path d="M862.2 49.8L872.6 60" stroke="#444" stroke-width=".7"/><rect x="860.6" y="48.4" width="2.2" height="2.2" fill="#fff" stroke="#444" stroke-width=".6"/><rect x="871.6" y="58.8" width="2.2" height="2.2" fill="#fff" stroke="#444" stroke-width=".6"/>
<rect x="881.6" y="47.6" width="14" height="13.4" fill="#fff" stroke="#000" stroke-width="1.2"/><path d="M884.6 47.6V61M887.4 47.6V61M890.2 47.6V61M893 47.6V61" stroke="#000" stroke-width="1.3"/>
<rect x="903.6" y="47.6" width="13.8" height="13.4" fill="#fff" stroke="#000" stroke-width="1.2"/><rect x="904.4" y="48.4" width="4" height="4" fill="#b9cfe4"/><rect x="908.4" y="48.4" width="4.4" height="4" fill="#a9b4c4"/><rect x="912.6" y="48.4" width="4" height="4" fill="#c8d8e8"/><rect x="904.4" y="52.4" width="4" height="4" fill="#7d95b0"/><rect x="908.4" y="52.4" width="4.4" height="4" fill="#1a1a1a"/><rect x="912.6" y="52.4" width="4" height="4" fill="#5f6f80"/><rect x="904.4" y="56.4" width="4" height="3.8" fill="#c4d6ea"/>
<rect x="946.6" y="48.4" width="10.8" height="10.6" rx="2.2" fill="#f0f0f0" stroke="#111" stroke-width="1.2"/><path d="M954.8 51V56.4L949 53.7Z" fill="#d8d8d8" stroke="#444" stroke-width=".8"/>
<g transform="translate(799.6 71.2)"><path d="M2 1.5V11.5M2 5C4 1.5 7 0.8 9.6 2.6" fill="none" stroke="#666" stroke-width="1"/><rect x="0.6" y="0.2" width="2.8" height="2.8" fill="#fff" stroke="#777" stroke-width=".7"/><circle cx="2" cy="6.4" r="1.4" fill="#fff" stroke="#777" stroke-width=".7"/><rect x="0.6" y="10.2" width="2.8" height="2.8" fill="#fff" stroke="#777" stroke-width=".7"/><path d="M9.8 2.2L11.6 2.2L11.9 5H9.5Z" fill="#8a8a8a"/><rect x="8.4" y="4.6" width="4.8" height="2.2" fill="#edd400" stroke="#b39a00" stroke-width=".4"/><rect x="7.8" y="6.8" width="6" height="6.4" rx=".6" fill="#3465a4" stroke="#204a87" stroke-width=".8"/><rect x="9.6" y="8.4" width="2.4" height="4.4" fill="#204a87" opacity=".5"/></g>
<g transform="translate(819.4 71.2) scale(.8)"><path d="M8 0L11 3.4H9.1V6.9H12.6V5L16 8L12.6 11V9.1H9.1V12.6H11L8 16L5 12.6H6.9V9.1H3.4V11L0 8L3.4 5V6.9H6.9V3.4H5Z" fill="#3465a4" stroke="#204a87" stroke-width=".6" stroke-linejoin="round"/><path d="M8 1.4L9.8 3.4H6.2ZM1.4 8L3.4 6.2V9.8ZM14.6 8L12.6 6.2V9.8Z" fill="#729fcf" opacity=".7"/></g>
<g transform="translate(771.6 621.4)"><path d="M2.5 2.5H9.5L12.5 5.5V13.5H2.5Z" fill="#f4f4f4" stroke="#9a9a9a" stroke-width=".9"/><path d="M9.5 2.5V5.5H12.5" fill="#ddd" stroke="#9a9a9a" stroke-width=".7"/><path d="M0.3 3.2H6.3M3.3 0.2V6.2" stroke="#000" stroke-width="1.7"/></g>
<g transform="translate(796 623.6)"><path d="M1 7.6L6.6 2L12.2 7.6" fill="none" stroke="#a8703c" stroke-width="1.7"/><path d="M1 7.6L6.6 2L12.2 7.6" fill="none" stroke="#e0b080" stroke-width=".7"/></g>
<g transform="translate(819.8 624)"><path d="M1 2L6.6 7.6L12.2 2" fill="none" stroke="#a8703c" stroke-width="1.7"/><path d="M1 2L6.6 7.6L12.2 2" fill="none" stroke="#e0b080" stroke-width=".7"/></g>
<g transform="translate(844 621.8)"><rect x="0.5" y="0.5" width="8.4" height="8.4" fill="#729fcf" stroke="#3465a4" stroke-width="1"/><rect x="2.4" y="2.4" width="4.6" height="4.6" fill="#a4c2e6"/><rect x="4.8" y="4.6" width="9" height="9" fill="#3465a4" stroke="#204a87" stroke-width="1"/></g>
<g transform="translate(868 621.8)"><rect x="0.6" y="0.6" width="12.4" height="12.4" fill="#ef2929" stroke="#000" stroke-width="1" stroke-dasharray="1.4 1"/><path d="M2.6 6.6A4.2 4.2 0 0 1 11 6.6" fill="none" stroke="#000" stroke-width="1.6"/><circle cx="6.8" cy="7.4" r="3.3" fill="#ef2929" stroke="#fff" stroke-width=".9"/></g>
<g transform="translate(892 621.4)"><rect x="0.6" y="3.6" width="9.6" height="9.6" fill="#fff" stroke="#000" stroke-width="1" stroke-dasharray="1.4 1"/><path d="M1.4 4.4H9.4V6L4 12.4H1.4Z" fill="#ef2929"/><path d="M4 12L12 1.6" stroke="#555" stroke-width="1"/><rect x="10.6" y="0.4" width="2.4" height="2.4" fill="#fff" stroke="#666" stroke-width=".6"/></g>
<g transform="translate(915.4 621.8)"><path d="M1.6 11.6C4 10 4.4 6.4 7 5.6C9.6 4.8 10.4 3 12.4 1.4" fill="none" stroke="#56749c" stroke-width="1.5"/><rect x="0.4" y="10.2" width="2.6" height="2.6" fill="#fff" stroke="#666" stroke-width=".6"/><rect x="5.6" y="4.4" width="2.6" height="2.6" fill="#fff" stroke="#666" stroke-width=".6"/><rect x="11" y="0.2" width="2.6" height="2.6" fill="#fff" stroke="#666" stroke-width=".6"/><circle cx="3.4" cy="3.6" r="1.3" fill="#fff" stroke="#666" stroke-width=".6"/><path d="M3.4 3.6L6.8 5.8" stroke="#777" stroke-width=".6"/></g>
<g transform="translate(940.8 623.2)"><path d="M1.6 1.6L10.4 10.4M10.4 1.6L1.6 10.4" stroke="#cc0000" stroke-width="3" stroke-linecap="butt"/></g>
</svg>
<span class="t " id="t0" style="left:26.3px;top:-1.00px;font-size:12px;color:#000;letter-spacing:-0.266px;">*[Unbenannt]-1.0 (RGB-Farben 8-Bit-Gamma-Ganzzahl, GIMP built-in sRGB, 1 Ebene) 400x400 – GIMP</span>
<span class="t " id="t1" style="left:5.0px;top:25.01px;font-size:12px;color:#000;letter-spacing:-0.226px;"><u>D</u>atei</span>
<span class="t " id="t2" style="left:46.4px;top:25.01px;font-size:12px;color:#000;letter-spacing:-0.286px;">Bearbeite<u>n</u></span>
<span class="t " id="t3" style="left:116.2px;top:25.01px;font-size:12px;color:#000;letter-spacing:-0.139px;"><u>A</u>uswahl</span>
<span class="t " id="t4" style="left:175.1px;top:25.01px;font-size:12px;color:#000;letter-spacing:0.075px;">An<u>s</u>icht</span>
<span class="t " id="t5" style="left:229.0px;top:25.01px;font-size:12px;color:#000;letter-spacing:-0.158px;"><u>B</u>ild</span>
<span class="t " id="t6" style="left:263.0px;top:25.01px;font-size:12px;color:#000;letter-spacing:-0.544px;"><u>E</u>bene</span>
<span class="t " id="t7" style="left:309.4px;top:25.01px;font-size:12px;color:#000;letter-spacing:-0.458px;"><u>F</u>arben</span>
<span class="t " id="t8" style="left:359.0px;top:25.01px;font-size:12px;color:#000;letter-spacing:-0.254px;"><u>W</u>erkzeuge</span>
<span class="t " id="t9" style="left:431.3px;top:25.01px;font-size:12px;color:#000;letter-spacing:-0.095px;">Filte<u>r</u></span>
<span class="t " id="t10" style="left:471.4px;top:25.01px;font-size:12px;color:#000;letter-spacing:-1.124px;">CFU</span>
<span class="t " id="t11" style="left:507.0px;top:25.01px;font-size:12px;color:#000;letter-spacing:-0.188px;">Script-Fu</span>
<span class="t " id="t12" style="left:569.5px;top:25.01px;font-size:12px;color:#000;letter-spacing:-0.217px;">Video</span>
<span class="t " id="t13" style="left:613.2px;top:25.01px;font-size:12px;color:#000;letter-spacing:-0.443px;"><u>F</u>enster</span>
<span class="t " id="t14" style="left:665.4px;top:25.01px;font-size:12px;color:#000;letter-spacing:0.117px;"><u>H</u>ilfe</span>
<span class="t " id="t15" style="left:1.1px;top:246.02px;font-size:9.8px;color:#000;font-weight:bold;letter-spacing:-0.194px;">Verschieben</span>
<span class="t " id="t16" style="left:1.1px;top:263.02px;font-size:9.8px;color:#000;letter-spacing:-0.130px;">Verschieben:</span>
<span class="t " id="t17" style="left:1.1px;top:284.02px;font-size:9.8px;color:#000;letter-spacing:0.033px;">Werkzeugmodus (Umschalt)</span>
<span class="t " id="t18" style="left:33.5px;top:301.02px;font-size:9.8px;color:#000;letter-spacing:-0.104px;">Ebene oder Hilfslinie auswählen</span>
<span class="t " id="t19" style="left:33.5px;top:322.02px;font-size:9.8px;color:#000;letter-spacing:-0.149px;">Aktive Ebene verschieben</span>
<span class="t " id="t20" style="left:767.2px;top:73.02px;font-size:9.8px;color:#000;letter-spacing:-0.506px;">Sperre:</span>
<span class="t " id="t21" style="left:865.4px;top:104.02px;font-size:9.8px;color:#fff;letter-spacing:-0.190px;">Auswahl</span>
<span class="t " id="t22" style="left:362.6px;top:621.02px;font-size:9.8px;color:#000;letter-spacing:-0.180px;">px</span>
<span class="t " id="t23" style="left:404.7px;top:620.02px;font-size:9.8px;color:#000;letter-spacing:-0.576px;">100 %</span>
<span class="t " id="t24" style="left:458.4px;top:618.01px;font-size:12px;color:#000;letter-spacing:-0.271px;">Eingefügte Ebene (1,9 MB)</span>
<span class="t r" id="t25" style="left:322.3px;top:105.01px;font-size:9.6px;color:#222;letter-spacing:-0.544px;">0</span>
<span class="t r" id="t26" style="left:422.3px;top:105.01px;font-size:9.6px;color:#222;letter-spacing:-0.539px;">100</span>
<span class="t r" id="t27" style="left:522.3px;top:105.01px;font-size:9.6px;color:#222;letter-spacing:-0.539px;">200</span>
<span class="t r" id="t28" style="left:622.3px;top:105.01px;font-size:9.6px;color:#222;letter-spacing:-0.539px;">300</span>
<span class="t r" id="t29" style="left:722.3px;top:105.01px;font-size:9.6px;color:#222;letter-spacing:-0.539px;">400</span>
<span class="t r" id="t30" style="left:288.4px;top:154.71px;font-size:9.6px;color:#222;letter-spacing:-0.544px;">0</span>
<span class="t r" id="t31" style="left:288.4px;top:254.71px;font-size:9.6px;color:#222;letter-spacing:-0.544px;">1</span>
<span class="t r" id="t32" style="left:288.4px;top:263.60px;font-size:9.6px;color:#222;letter-spacing:-0.544px;">0</span>
<span class="t r" id="t33" style="left:288.4px;top:272.51px;font-size:9.6px;color:#222;letter-spacing:-0.544px;">0</span>
<span class="t r" id="t34" style="left:288.4px;top:354.71px;font-size:9.6px;color:#222;letter-spacing:-0.544px;">2</span>
<span class="t r" id="t35" style="left:288.4px;top:363.60px;font-size:9.6px;color:#222;letter-spacing:-0.544px;">0</span>
<span class="t r" id="t36" style="left:288.4px;top:372.51px;font-size:9.6px;color:#222;letter-spacing:-0.544px;">0</span>
<span class="t r" id="t37" style="left:288.4px;top:454.71px;font-size:9.6px;color:#222;letter-spacing:-0.544px;">3</span>
<span class="t r" id="t38" style="left:288.4px;top:463.60px;font-size:9.6px;color:#222;letter-spacing:-0.544px;">0</span>
<span class="t r" id="t39" style="left:288.4px;top:472.51px;font-size:9.6px;color:#222;letter-spacing:-0.544px;">0</span>
<span class="t r" id="t40" style="left:288.4px;top:554.71px;font-size:9.6px;color:#222;letter-spacing:-0.544px;">4</span>
<span class="t r" id="t41" style="left:288.4px;top:563.60px;font-size:9.6px;color:#222;letter-spacing:-0.544px;">0</span>
<span class="t r" id="t42" style="left:288.4px;top:572.51px;font-size:9.6px;color:#222;letter-spacing:-0.544px;">0</span>
<div style="left:915px;top:111px;width:198px;height:453.4px;background:#f1f1f1;border:1px solid #c6c6c6;box-sizing:border-box;box-shadow:2.5px 2.5px 4px rgba(0,0,0,.45)"></div>
<div style="left:917px;top:520.4px;width:194.4px;height:20.2px;background:#91c9f7;"></div>
<div style="left:920.5px;top:178.2px;width:189px;height:1px;background:#d7d7d7;"></div>
<div style="left:920.5px;top:310.0px;width:189px;height:1px;background:#d7d7d7;"></div>
<div style="left:920.5px;top:422.5px;width:189px;height:1px;background:#d7d7d7;"></div>
<div style="left:920.5px;top:473.3px;width:189px;height:1px;background:#d7d7d7;"></div>
<svg style="left:1098px;top:160px" width="8" height="10" viewBox="0 0 8 10"><path d="M1.8 1.4L6 4.7L1.8 8Z" fill="#000"/></svg>
<svg style="left:915px;top:112px" width="30" height="452" viewBox="915 112 30 452">
<g transform="translate(921.8 117.9)"><path d="M2 1.5V11.5M2 5C4 1.5 7 0.8 9.6 2.6" fill="none" stroke="#666" stroke-width="1"/><rect x="0.6" y="0.2" width="2.8" height="2.8" fill="#fff" stroke="#777" stroke-width=".7"/><circle cx="2" cy="6.4" r="1.4" fill="#fff" stroke="#777" stroke-width=".7"/><rect x="0.6" y="10.2" width="2.8" height="2.8" fill="#fff" stroke="#777" stroke-width=".7"/><path d="M9.8 2.2L11.6 2.2L11.9 5H9.5Z" fill="#8a8a8a"/><rect x="8.4" y="4.6" width="4.8" height="2.2" fill="#edd400" stroke="#b39a00" stroke-width=".4"/><rect x="7.8" y="6.8" width="6" height="6.4" rx=".6" fill="#3465a4" stroke="#204a87" stroke-width=".8"/><rect x="9.6" y="8.4" width="2.4" height="4.4" fill="#204a87" opacity=".5"/></g>
<path d="M934.2 139.9L924.6 149.5" stroke="#3465a4" stroke-width="2.8"/><path d="M933.6 139.7L924.4 148.9" stroke="#729fcf" stroke-width=".7"/><path d="M922.2 151.9L923.2 148.6L925.6 151Z" fill="#e0b080" stroke="#a87840" stroke-width=".4"/><path d="M922.2 151.9L922.8 150.6L923.6 151.4Z" fill="#333"/>
<g transform="translate(920.6 186.6)"><path d="M2.5 2.5H9.5L12.5 5.5V13.5H2.5Z" fill="#f4f4f4" stroke="#9a9a9a" stroke-width=".9"/><path d="M9.5 2.5V5.5H12.5" fill="#ddd" stroke="#9a9a9a" stroke-width=".7"/><path d="M0.3 3.2H6.3M3.3 0.2V6.2" stroke="#000" stroke-width="1.7"/></g>
<g transform="translate(922.2 210.2)"><path d="M1 7.6L6.6 2L12.2 7.6" fill="none" stroke="#a8703c" stroke-width="1.7"/><path d="M1 7.6L6.6 2L12.2 7.6" fill="none" stroke="#e0b080" stroke-width=".7"/></g>
<g transform="translate(922.2 231.6)"><path d="M1 2L6.6 7.6L12.2 2" fill="none" stroke="#a8703c" stroke-width="1.7"/><path d="M1 2L6.6 7.6L12.2 2" fill="none" stroke="#e0b080" stroke-width=".7"/></g>
<g transform="translate(921.6 249.6)"><rect x="0.5" y="0.5" width="8.4" height="8.4" fill="#729fcf" stroke="#3465a4" stroke-width="1"/><rect x="2.4" y="2.4" width="4.6" height="4.6" fill="#a4c2e6"/><rect x="4.8" y="4.6" width="9" height="9" fill="#3465a4" stroke="#204a87" stroke-width="1"/></g>
<g transform="translate(922.6 272.2)"><path d="M1.6 1.6L10.4 10.4M10.4 1.6L1.6 10.4" stroke="#cc0000" stroke-width="3" stroke-linecap="butt"/></g>
<g transform="translate(921.8 319.2)"><rect x="0.6" y="0.6" width="12.4" height="12.4" fill="#ef2929" stroke="#000" stroke-width="1" stroke-dasharray="1.4 1"/><path d="M2.6 6.6A4.2 4.2 0 0 1 11 6.6" fill="none" stroke="#000" stroke-width="1.6"/><circle cx="6.8" cy="7.4" r="3.3" fill="#ef2929" stroke="#fff" stroke-width=".9"/></g>
<g transform="translate(921.8 340.4)"><rect x="0.6" y="0.6" width="8.6" height="8.6" fill="#eee" stroke="#333" stroke-width="1"/><rect x="4.2" y="4.4" width="8.6" height="8.6" fill="#e88" stroke="#333" stroke-width="1" stroke-dasharray="1.4 1"/><rect x="5.6" y="5.8" width="5.8" height="5.8" fill="#e24a4a"/></g>
<g transform="translate(921.8 361.4)"><rect x="0.6" y="0.6" width="8.6" height="8.6" fill="#ef2929" stroke="#333" stroke-width="1"/><rect x="4.2" y="4.4" width="8.6" height="8.6" fill="#e8e8e8" stroke="#333" stroke-width="1" stroke-dasharray="1.4 1"/><rect x="4.8" y="5" width="3.8" height="3.6" fill="#e88"/></g>
<g transform="translate(921.8 382.4)"><rect x="0.6" y="0.6" width="8.6" height="8.6" fill="#eee" stroke="#333" stroke-width="1"/><rect x="4.2" y="4.4" width="8.6" height="8.6" fill="#eee" stroke="#333" stroke-width="1" stroke-dasharray="1.4 1"/><rect x="4.4" y="4.6" width="4.6" height="4.6" fill="#ef2929"/></g>
<g transform="translate(921.8 402.8)"><rect x="0.6" y="3.6" width="9.6" height="9.6" fill="#fff" stroke="#000" stroke-width="1" stroke-dasharray="1.4 1"/><path d="M1.4 4.4H9.4V6L4 12.4H1.4Z" fill="#ef2929"/><path d="M4 12L12 1.6" stroke="#555" stroke-width="1"/><rect x="10.6" y="0.4" width="2.4" height="2.4" fill="#fff" stroke="#666" stroke-width=".6"/></g>
<g transform="translate(922 432.4) scale(.78)"><path d="M1 10V4.6C1 3.4 2 3 3 3H5.6" fill="none" stroke="#3465a4" stroke-width="2.2"/><path d="M4.6 5.6L12.6 1.2L16.8 8.8L9 13.6Z" fill="#f6f6f6" stroke="#555" stroke-width="1"/><path d="M9.6 2.6C9.4 0.4 11 -1 13 -0.2C14.6 0.6 15 2.6 14.8 5" fill="none" stroke="#777" stroke-width="1"/><circle cx="10" cy="6.2" r="1.5" fill="#bbb" stroke="#555" stroke-width=".8"/></g>
<g transform="translate(921.6 453.4)"><path d="M1.6 11.6C4 10 4.4 6.4 7 5.6C9.6 4.8 10.4 3 12.4 1.4" fill="none" stroke="#56749c" stroke-width="1.5"/><rect x="0.4" y="10.2" width="2.6" height="2.6" fill="#fff" stroke="#666" stroke-width=".6"/><rect x="5.6" y="4.4" width="2.6" height="2.6" fill="#fff" stroke="#666" stroke-width=".6"/><rect x="11" y="0.2" width="2.6" height="2.6" fill="#fff" stroke="#666" stroke-width=".6"/><circle cx="3.4" cy="3.6" r="1.3" fill="#fff" stroke="#666" stroke-width=".6"/><path d="M3.4 3.6L6.8 5.8" stroke="#777" stroke-width=".6"/></g>
<rect x="927.4" y="482" width="7.6" height="7.6" fill="#f4f4f4" stroke="#ddd" stroke-width=".6"/><path d="M922 487.4H928V491.4H932V494.6H922Z" fill="#d0902c" stroke="#b07818" stroke-width=".5"/>
<rect x="922.4" y="504.6" width="12" height="12.6" rx="1" fill="#f8f4ec" stroke="#c8922e" stroke-width="1.5"/><rect x="925.6" y="503.2" width="5.6" height="2.6" rx=".8" fill="#999"/><path d="M931 516.6V513H934" fill="none" stroke="#ccc" stroke-width=".7"/>
<path d="M921.8 538V533.6L924.6 529.4H932.6L935.2 533.6V538Z" fill="#cfcfcf" stroke="#b0b0b0" stroke-width=".6"/><path d="M922 534.2H935" stroke="#efefef" stroke-width=".9"/><path d="M927.2 524.4H929.8V528.4H932.4L928.5 532.8L924.6 528.4H927.2Z" fill="#62c81e" stroke="#3f9a10" stroke-width=".5"/>
<path d="M923.4 547.4H929L930 548.6H934.4V559H923.4Z" fill="#f0f0f0" stroke="#c4c4c4" stroke-width=".7"/><path d="M921.8 559L923.8 551.6H935.8L933.8 559Z" fill="#5b8ccb" stroke="#3465a4" stroke-width=".6"/>
</svg>
<span class="t m" id="t49" style="left:943.3px;top:119.01px;font-size:12px;color:#000;letter-spacing:-0.171px;">Pfad bearbei<u>t</u>en</span>
<span class="t m" id="t50" style="left:943.3px;top:140.01px;font-size:12px;color:#000;letter-spacing:-0.175px;">Pfadeig<u>e</u>nschaften ...</span>
<span class="t m" id="t51" style="left:943.3px;top:160.01px;font-size:12px;color:#000;letter-spacing:-0.115px;">Farbmarkierung</span>
<span class="t m" id="t52" style="left:943.3px;top:188.01px;font-size:12px;color:#000;letter-spacing:-0.289px;"><u>N</u>euer Pfad ...</span>
<span class="t m" id="t53" style="left:943.3px;top:209.01px;font-size:12px;color:#8b8b8b;letter-spacing:-0.205px;">Pfad <u>a</u>nheben</span>
<span class="t m" id="t54" style="left:943.3px;top:230.01px;font-size:12px;color:#8b8b8b;letter-spacing:-0.300px;">Pfad a<u>b</u>senken</span>
<span class="t m" id="t55" style="left:943.3px;top:251.01px;font-size:12px;color:#000;letter-spacing:-0.100px;">Pfad <u>d</u>uplizieren</span>
<span class="t m" id="t56" style="left:943.3px;top:272.01px;font-size:12px;color:#000;letter-spacing:-0.184px;">Pfad <u>l</u>öschen</span>
<span class="t m" id="t57" style="left:943.3px;top:292.01px;font-size:12px;color:#8b8b8b;letter-spacing:-0.228px;">Sichtbare Pfade <u>v</u>ereinen</span>
<span class="t m" id="t58" style="left:943.3px;top:320.01px;font-size:12px;color:#000;letter-spacing:-0.217px;">Aus<u>w</u>ahl aus Pfad</span>
<span class="t m" id="t59" style="left:943.3px;top:341.01px;font-size:12px;color:#000;letter-spacing:0.009px;">Zur Auswahl <u>h</u>inzufügen</span>
<span class="t m" id="t60" style="left:943.3px;top:362.01px;font-size:12px;color:#000;letter-spacing:-0.109px;">Von Auswahl ab<u>z</u>iehen</span>
<span class="t m" id="t61" style="left:943.3px;top:383.01px;font-size:12px;color:#000;letter-spacing:0.018px;">Schnittmenge <u>b</u>ilden</span>
<span class="t m" id="t62" style="left:943.3px;top:404.01px;font-size:12px;color:#000;letter-spacing:-0.176px;">P<u>f</u>ad aus Auswahl</span>
<span class="t m" id="t63" style="left:943.3px;top:433.01px;font-size:12px;color:#000;letter-spacing:-0.130px;">Pfad füllen ...</span>
<span class="t m" id="t64" style="left:943.3px;top:454.01px;font-size:12px;color:#000;letter-spacing:-0.239px;"><u>P</u>fad nachziehen ...</span>
<span class="t m" id="t65" style="left:943.3px;top:483.01px;font-size:12px;color:#000;letter-spacing:-0.136px;">Pfad <u>k</u>opieren</span>
<span class="t m" id="t66" style="left:943.3px;top:504.01px;font-size:12px;color:#000;letter-spacing:-0.052px;">Pfad e<u>i</u>nfügen</span>
<span class="t m" id="t67" style="left:943.3px;top:525.01px;font-size:12px;color:#000;letter-spacing:-0.205px;">Pfad e<u>x</u>portieren ...</span>
<span class="t m" id="t68" style="left:943.3px;top:546.01px;font-size:12px;color:#000;letter-spacing:-0.065px;">Pfad i<u>m</u>portieren ...</span>
<div style="left:797.1px;top:39.9px;width:27.8px;height:28.2px;border:2.4px solid #bf2d5e;box-sizing:border-box"></div>
<div style="left:908px;top:520.4px;width:150.2px;height:24.2px;border:2.2px solid #bf2d5e;box-sizing:border-box"></div>
<svg style="left:845px;top:515px" width="56" height="36" viewBox="845 515 56 36"><g fill="none" stroke="#bf2d5e" stroke-linecap="round" stroke-linejoin="round"><path d="M850.5 532.6H893" stroke-width="4.2"/><path d="M874.5 521.5L894.5 532.6L876 544.5" stroke-width="4.4"/></g></svg>
<span class="t z" id="t43" style="left:765.0px;top:440.01px;font-size:19.5px;color:#bf2d5e;letter-spacing:-0.012px;">im Pfaddialog</span>
<span class="t z" id="t44" style="left:765.0px;top:464.01px;font-size:19.5px;color:#bf2d5e;letter-spacing:0.195px;">rechte Maustaste</span>
<span class="t z" id="t45" style="left:778.3px;top:559.01px;font-size:17.8px;color:#bf2d5e;letter-spacing:-0.002px;">Endung</span>
<span class="t z" id="t46" style="left:778.3px;top:579.01px;font-size:17.8px;color:#bf2d5e;">svg</span>
<span class="t z" id="t47" style="left:778.3px;top:600.01px;font-size:17.8px;color:#bf2d5e;letter-spacing:-0.076px;">eintippen</span>
</div></body></html>
